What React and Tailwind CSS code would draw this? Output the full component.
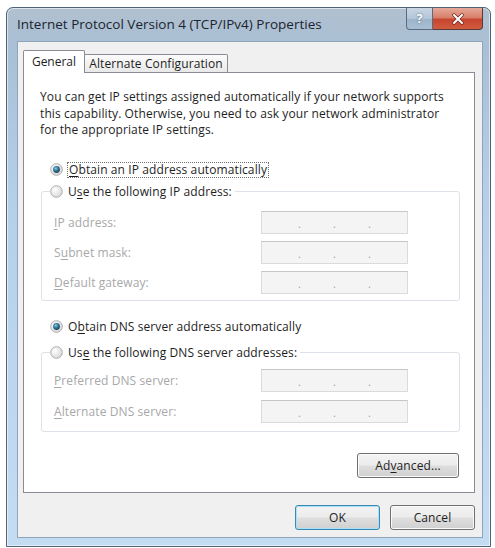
import React from "react";

const Radio = ({ checked }) => (
  <svg width="13" height="13" viewBox="0 0 13 13" className="shrink-0">
    <defs>
      <radialGradient id="rbFill" cx="0.35" cy="0.35" r="0.8">
        <stop offset="0" stopColor="#ffffff" />
        <stop offset="1" stopColor="#d2d2d2" />
      </radialGradient>
      <radialGradient id="rbDot" cx="0.4" cy="0.35" r="0.7">
        <stop offset="0" stopColor="#8fd0ea" />
        <stop offset="0.5" stopColor="#2f7395" />
        <stop offset="1" stopColor="#1d3f57" />
      </radialGradient>
    </defs>
    <circle cx="6.5" cy="6.5" r="5.8" fill="url(#rbFill)" stroke="#adadad" strokeWidth="1" />
    {checked && <circle cx="6.5" cy="6.5" r="3.4" fill="url(#rbDot)" />}
  </svg>
);

const Key = ({ children }) => (
  <span className="underline underline-offset-[2px] decoration-[1px]">{children}</span>
);

const IpBox = () => (
  <div className="w-[147px] h-[23px] border border-[#dadada] border-t-[#c6c6c6] bg-[#f4f4f4] flex justify-center items-center text-[#a3a3a3] text-[11px]">
    <span className="w-[35px] text-center pt-[3px]">.</span>
    <span className="w-[35px] text-center pt-[3px]">.</span>
    <span className="w-[35px] text-center pt-[3px]">.</span>
  </div>
);

const FieldRow = ({ label, className = "" }) => (
  <div className={"flex items-center " + className}>
    <span className="ml-[4px] w-[207px] text-[#a8a8a8]">{label}</span>
    <IpBox />
  </div>
);

const btn =
  "h-[25px] rounded-[3px] border bg-[linear-gradient(to_bottom,#f3f3f3_0%,#ececec_48%,#dedede_52%,#d0d0d0_100%)] text-[12px] text-[#1e1e1e] flex items-center justify-center";

export default function App() {
  return (
    <div className="w-[495px] h-[548px] bg-white pt-[7px] pl-[6px] font-['Open_Sans',sans-serif] text-[#1e1e1e]">
      <div className="w-[485px] h-[540px] rounded-t-[7px] border border-[#4f6276] bg-[linear-gradient(to_bottom,#b0c0cf_0px,#a9bfd5_40px,#b6d0ea_200px,#c4dcf2_100%)] shadow-[inset_0_0_0_1px_rgba(255,255,255,0.55)] flex flex-col">
        {/* caption */}
        <div className="h-[33px] flex items-start shrink-0">
          <div className="pl-[10px] pt-[8px] text-[13.5px] leading-[16px] text-[#1b2430] whitespace-nowrap">
            Internet Protocol Version 4 (TCP/IPv4) Properties
          </div>
          <div className="ml-auto mr-[7px] flex h-[22px]">
            <div className="w-[27px] h-full border border-t-0 border-[#5a6b7e] rounded-bl-[4px] bg-[linear-gradient(to_bottom,#c9d6e3_0%,#b4c6d8_50%,#9db3c9_51%,#a9bfd4_100%)] flex items-center justify-center text-white font-bold text-[12px] leading-none [text-shadow:0_0_2px_#44566a]">
              ?
            </div>
            <div className="w-[50px] h-full border border-t-0 border-l-0 border-[#5a3a36] rounded-br-[4px] bg-[linear-gradient(to_bottom,#e6a999_0%,#d8806b_45%,#c8452f_55%,#d15c3e_100%)] flex items-center justify-center">
              <svg width="14" height="12" viewBox="0 0 14 12">
                <path d="M3 2 L11 10 M11 2 L3 10" stroke="#6b2a22" strokeWidth="3.4" strokeLinecap="round" />
                <path d="M3 2 L11 10 M11 2 L3 10" stroke="#ffffff" strokeWidth="2" strokeLinecap="round" />
              </svg>
            </div>
          </div>
        </div>

        {/* client area */}
        <div className="ml-[10px] w-[466px] h-[497px] bg-[#f0f0f0] border border-[#8fa5ba] flex flex-col text-[12px] leading-[15px] tracking-[0.1px]">
          {/* tabs */}
          <div className="mt-[8px] ml-[5px] h-[23px] flex items-end">
            <div className="relative z-10 w-[62px] h-[23px] border border-b-0 border-[#898c95] rounded-t-[2px] bg-white flex justify-center pt-[3px] tracking-normal">
              General
            </div>
            <div className="w-[143px] h-[19px] border border-l-0 border-b-0 border-[#898c95] rounded-tr-[2px] bg-[linear-gradient(to_bottom,#fbfbfb,#e8e8e8)] flex justify-center pt-[1px]">
              Alternate Configuration
            </div>
          </div>

          {/* tab page */}
          <div className="-mt-px ml-[5px] w-[452px] h-[421px] border border-[#898c95] bg-white flex flex-col">
            <p className="pl-[16px] pt-[16px] leading-[16.5px] whitespace-nowrap">
              You can get IP settings assigned automatically if your network supports
              <br />
              this capability. Otherwise, you need to ask your network administrator
              <br />
              for the appropriate IP settings.
            </p>

            <div className="mt-[22px] h-[18px] pl-[26px] flex items-center">
              <Radio checked />
              <span className="ml-[4px] border border-dotted border-[#6e6e6e] px-[1px] leading-[14px]">
                <Key>O</Key>btain an IP address automatically
              </span>
            </div>

            <fieldset className="mt-[4px] ml-[17px] mr-[14px] border border-[#dce2e7] rounded-[3px] px-[8px] pb-[6px]">
              <legend className="pr-[3px]">
                <div className="h-[18px] flex items-center">
                  <Radio />
                  <span className="ml-[5px]">
                    U<Key>s</Key>e the following IP address:
                  </span>
                </div>
              </legend>
              <FieldRow className="mt-[10px]" label={<><Key>I</Key>P address:</>} />
              <FieldRow className="mt-[7px]" label={<>S<Key>u</Key>bnet mask:</>} />
              <FieldRow className="mt-[7px]" label={<><Key>D</Key>efault gateway:</>} />
            </fieldset>

            <div className="mt-[17px] h-[18px] pl-[26px] flex items-center">
              <Radio checked />
              <span className="ml-[5px]">
                O<Key>b</Key>tain DNS server address automatically
              </span>
            </div>

            <fieldset className="mt-[8px] ml-[17px] mr-[14px] border border-[#dce2e7] rounded-[3px] px-[8px] pb-[8px]">
              <legend className="pr-[3px]">
                <div className="h-[18px] flex items-center">
                  <Radio />
                  <span className="ml-[5px]">
                    Us<Key>e</Key> the following DNS server addresses:
                  </span>
                </div>
              </legend>
              <FieldRow className="mt-[7px]" label={<><Key>P</Key>referred DNS server:</>} />
              <FieldRow className="mt-[8px]" label={<><Key>A</Key>lternate DNS server:</>} />
            </fieldset>

            <div className="mt-[21px] mr-[15px] self-end">
              <button className={btn + " w-[102px] border-[#707070] shadow-[inset_0_0_0_1px_#fbfbfb]"}>
                Ad<Key>v</Key>anced...
              </button>
            </div>
          </div>

          {/* dialog buttons */}
          <div className="mt-[12px] mr-[7px] flex justify-end gap-[10px]">
            <button className={btn + " w-[85px] border-[#3a88b4] shadow-[inset_0_0_0_1px_#a8e1f7]"}>OK</button>
            <button className={btn + " w-[85px] border-[#707070] shadow-[inset_0_0_0_1px_#fbfbfb]"}>Cancel</button>
          </div>
        </div>
      </div>
    </div>
  );
}
